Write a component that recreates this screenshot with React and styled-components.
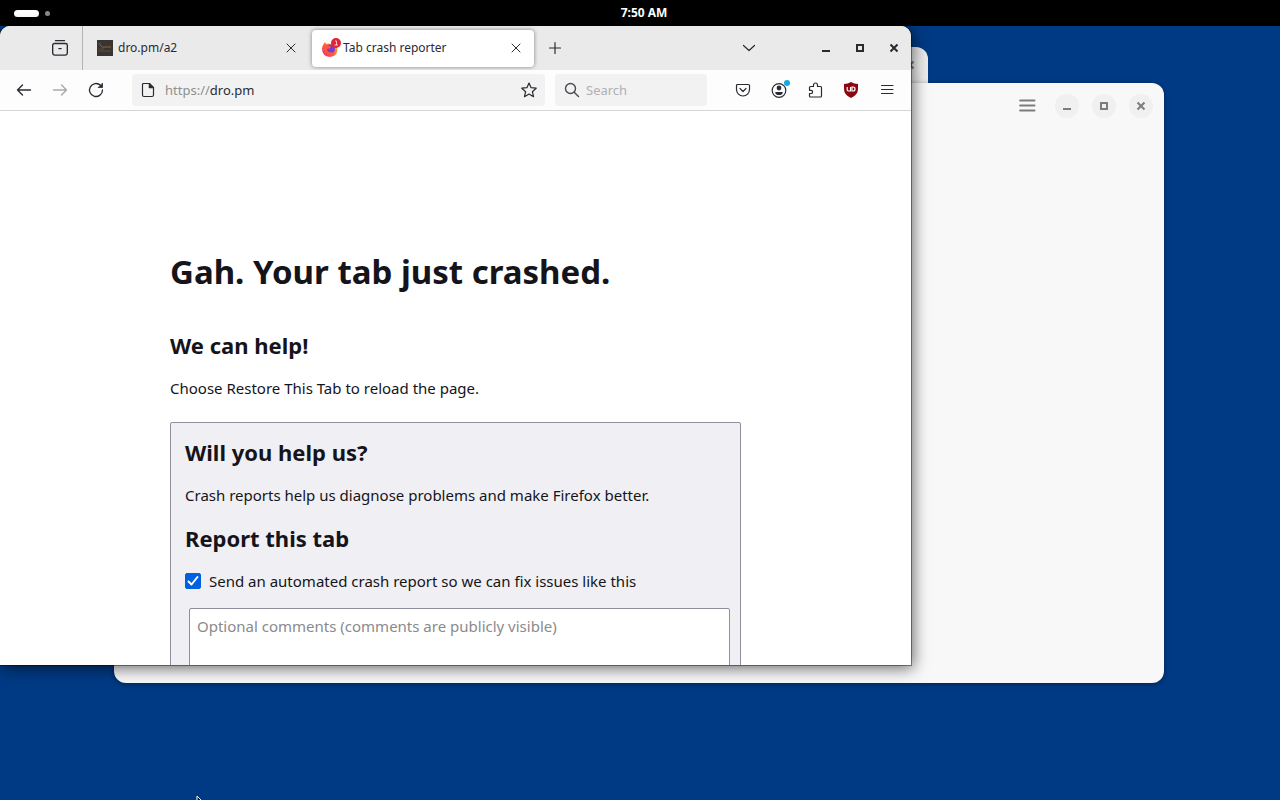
import React, { useState } from "react";
import styled, { createGlobalStyle } from "styled-components";

const GlobalStyle = createGlobalStyle`
  * {
    box-sizing: border-box;
  }

  body {
    margin: 0;
    font-family: "Noto Sans", sans-serif;
    color: #15141a;
  }

  button,
  input,
  textarea {
    font-family: inherit;
  }
`;

/* desktop */

const Desktop = styled.div`
  display: flex;
  flex-direction: column;
  height: 100vh;
  overflow: hidden;
  background: #003a84;
`;

const TopBar = styled.header`
  display: grid;
  grid-template-columns: 1fr auto 1fr;
  align-items: center;
  height: 26px;
  flex: none;
  padding: 0 6px 0 14px;
  background: #000;
`;

const Workspaces = styled.button`
  display: flex;
  align-items: center;
  gap: 6px;
  padding: 0;
  border: 0;
  background: none;
`;

const Dot = styled.span`
  width: ${props => (props.$active ? "25px" : "5px")};
  height: ${props => (props.$active ? "7px" : "5px")};
  border-radius: 4px;
  background: ${props => (props.$active ? "#fff" : "#8a8a8a")};
`;

const Clock = styled.time`
  font-size: 12px;
  font-weight: 700;
  line-height: 16px;
  color: #fff;
`;

const Workspace = styled.main`
  position: relative;
  flex: 1;
`;

const Window = styled.section`
  position: absolute;
  left: ${props => props.$x}px;
  top: ${props => props.$y}px;
  width: ${props => props.$w}px;
  height: ${props => props.$h}px;
  display: flex;
  flex-direction: column;
  overflow: hidden;
`;

const TerminalWindow = styled(Window)`
  align-items: flex-end;
  padding: 6px;
  border-radius: 12px 12px 0 0;
  background: #ededed;
`;

const FilesWindow = styled(Window)`
  border-radius: 12px;
  background: #f8f8f8;
  box-shadow: 0 1px 5px rgba(0, 0, 0, 0.4);
`;

const BrowserWindow = styled(Window)`
  border-radius: 10px 10px 0 0;
  background: #fff;
  box-shadow: 0 0 0 1px rgba(0, 0, 0, 0.4), 2px 3px 16px rgba(0, 0, 0, 0.6);
`;

const FilesHeader = styled.header`
  display: flex;
  justify-content: flex-end;
  align-items: center;
  gap: 13px;
  height: 46px;
  padding: 0 11px;
`;

const RoundButton = styled.button`
  display: flex;
  align-items: center;
  justify-content: center;
  width: 24px;
  height: 24px;
  padding: 0;
  border: 0;
  border-radius: 50%;
  background: ${props => (props.$plain ? "none" : "#f0f0f0")};
  margin-right: ${props => (props.$plain ? "3px" : "0")};
  color: #7c7c7c;
`;

/* browser chrome */

const TabStrip = styled.div`
  display: flex;
  align-items: center;
  flex: none;
  height: 44px;
  background: #eaeaea;
`;

const RecentTabs = styled.div`
  display: flex;
  align-items: center;
  justify-content: flex-end;
  align-self: stretch;
  width: 83px;
  padding-right: 4px;
  margin-right: 4px;
  border-right: 1px solid #b4b4b4;
`;

const Tabs = styled.div`
  display: flex;
  gap: 3px;
`;

const Tab = styled.div`
  display: flex;
  align-items: center;
  width: 222px;
  height: 37px;
  padding: 0 6px 0 10px;
  border-radius: 4px;
  background: ${props => (props.$active ? "#fff" : "transparent")};
  box-shadow: ${props =>
    props.$active ? "0 0 4px rgba(0, 0, 0, 0.45)" : "none"};
`;

const TabTitle = styled.button`
  display: flex;
  align-items: center;
  gap: 5px;
  flex: 1;
  padding: 0;
  border: 0;
  background: none;
  font-size: 12px;
  line-height: 16px;
  color: #2b2a33;

  svg {
    overflow: visible;
  }
`;

const ChromeButton = styled.button`
  position: relative;
  display: flex;
  align-items: center;
  justify-content: center;
  flex: none;
  width: ${props => props.$w || 36}px;
  height: 32px;
  padding: 0;
  border: 0;
  background: none;
  color: ${props => (props.disabled ? "#a9a9a9" : "#2b2a33")};
`;

const WindowControls = styled.div`
  display: flex;
  align-items: center;
  margin-left: auto;
`;

const ListAllTabs = styled(ChromeButton)`
  margin-right: 42px;
`;

const Toolbar = styled.nav`
  display: flex;
  align-items: center;
  flex: none;
  height: 41px;
  padding: 0 6px;
  background: #fdfdfd;
  border-bottom: 1px solid #d6d6d6;
`;

const Fields = styled.div`
  display: flex;
  flex: 1;
  gap: 10px;
  margin: 0 18px;
`;

const UrlBar = styled.div`
  display: flex;
  align-items: center;
  flex: 1;
  height: 32px;
  padding-left: 8px;
  border-radius: 4px;
  background: #f2f2f2;
  color: #2b2a33;
`;

const Address = styled.a`
  flex: 1;
  margin-left: 9px;
  font-size: 13px;
  line-height: 18px;
  color: #2b2a33;
  text-decoration: none;

  span {
    color: #8f8f8f;
  }
`;

const SearchBar = styled.label`
  display: flex;
  align-items: center;
  gap: 6px;
  width: 152px;
  height: 32px;
  padding: 0 9px;
  border-radius: 4px;
  background: #f2f2f2;
  color: #4a4952;
`;

const SearchInput = styled.input`
  flex: 1;
  min-width: 0;
  padding: 0;
  border: 0;
  outline: 0;
  background: none;
  font-size: 13px;
  line-height: 18px;

  &::placeholder {
    color: #b0b0b0;
    opacity: 1;
  }
`;

const Badge = styled.span`
  position: absolute;
  top: 6px;
  right: 7px;
  width: 6px;
  height: 6px;
  border-radius: 50%;
  background: #12a8e0;
`;

/* crash page */

const Page = styled.article`
  flex: 1;
  min-height: 0;
  overflow: hidden;
  padding: 139px 170px 0;
`;

const Title = styled.h1`
  margin: 0 0 36px;
  font-size: 33px;
  font-weight: 700;
  line-height: 44px;
`;

const Heading = styled.h2`
  margin: 0 0 18px;
  font-size: 22px;
  font-weight: 700;
  line-height: 30px;
`;

const Text = styled.p`
  margin: 0 0 ${props => props.$gap || 18}px;
  font-size: 15px;
  line-height: 20px;
`;

const ReportBox = styled.form`
  padding: 14px 10px 14px 14px;
  border: 1px solid #8f8f9d;
  border-radius: 2px;
  background: #f0f0f4;
`;

const CheckRow = styled.label`
  display: flex;
  align-items: center;
  gap: 8px;
  margin-bottom: 17px;
  font-size: 15px;
  line-height: 20px;
`;

const Checkbox = styled.input`
  appearance: none;
  width: 16px;
  height: 16px;
  margin: 0;
  border: 1px solid #8f8f9d;
  border-radius: 2px;
  background: #fff;

  &:checked {
    border-color: #0061e0;
    background: #0061e0
      url("data:image/svg+xml,%3Csvg xmlns='http://www.w3.org/2000/svg' viewBox='0 0 14 14'%3E%3Cpath d='M2.5 7.5l3 3 6-7.5' fill='none' stroke='white' stroke-width='2' stroke-linecap='round' stroke-linejoin='round'/%3E%3C/svg%3E")
      center / 14px no-repeat;
  }
`;

const Comments = styled.textarea`
  display: block;
  width: calc(100% - 4px);
  height: 100px;
  margin-left: 4px;
  padding: 7px;
  border: 1px solid #8f8f9d;
  border-radius: 2px;
  background: #fff;
  font-size: 15px;
  line-height: 20px;
  resize: none;

  &::placeholder {
    color: #8a8a8e;
    opacity: 1;
  }
`;

const Pointer = styled.svg`
  position: absolute;
  left: 196px;
  top: 769px;
`;

const Svg = ({ size = 16, w = 1.2, children }) => (
  <svg
    width={size}
    height={size}
    viewBox="0 0 16 16"
    fill="none"
    stroke="currentColor"
    strokeWidth={w}
    strokeLinecap="round"
    strokeLinejoin="round"
    aria-hidden="true"
  >
    {children}
  </svg>
);

const MinimizeIcon = () => (
  <Svg w={2}>
    <path d="M4 11h8" strokeLinecap="butt" />
  </Svg>
);

const MaximizeIcon = () => (
  <Svg w={2}>
    <path d="M5 5h6v6H5z" strokeLinejoin="miter" />
  </Svg>
);

const CloseIcon = () => (
  <Svg w={2}>
    <path d="M4.5 4.5l7 7M11.5 4.5l-7 7" strokeLinecap="butt" />
  </Svg>
);

const ThinClose = () => (
  <Svg w={1}>
    <path d="M4 4l8 8M12 4l-8 8" />
  </Svg>
);

const MenuIcon = ({ size, w }) => (
  <Svg size={size} w={w}>
    <path d="M2.5 3.5h11.5M2.5 7.500h11.500M2.500 11.500h11.500" />
  </Svg>
);

const TerminalFavicon = () => (
  <svg width="16" height="16" viewBox="0 0 16 16" aria-hidden="true">
    <path d="M0 0h16v16H0z" fill="#393433" />
    <path d="M2 3l2 3q1 2 3 1h7" stroke="#8a6238" fill="none" />
    <path d="M1 11h13M2 9h5" stroke="#664b35" fill="none" />
  </svg>
);

/* the crash badge hangs over the right edge of the logo */
const FirefoxFavicon = () => (
  <svg width="16" height="16" viewBox="0 0 16 16" aria-hidden="true">
    <defs>
      <linearGradient id="fox" x1="1" y1="0" x2="0" y2="1">
        <stop offset="0" stopColor="#ffc53c" />
        <stop offset="0.4" stopColor="#ff7a2c" />
        <stop offset="1" stopColor="#ee1f70" />
      </linearGradient>
    </defs>
    <path
      d="M1 5l2-3 1 2q3-1 5 0l6 3q2 9-7 10Q0 16 0 9q0-2 1-4z"
      fill="url(#fox)"
    />
    <circle cx="8.500" cy="9" r="4.500" fill="#7b3bd6" />
    <path d="M2 6q4-2 7 1-1 2-4 2 0 4 6 3-3 4-7 1-3-3-2-7z" fill="#ff5440" />
    <circle cx="14" cy="3" r="5" fill="#de2435" />
    <path d="M13 1h1.500v4M12.500 5h3.500" stroke="#ffc9cd" fill="none" />
  </svg>
);

const ShieldIcon = () => (
  <svg width="16" height="16" viewBox="0 0 16 16" aria-hidden="true">
    <path
      d="M8 0q3 2 7 2v5q0 6-7 9Q1 13 1 7V2q4 0 7-2z"
      fill="#8a0610"
    />
    <path
      d="M4.200 5v2.800q0 1 1.200 1.200h2.100V5M9 5v4h1q2 0 2-2t-2-2z"
      fill="none"
      stroke="#fff"
      strokeWidth="1.2"
    />
  </svg>
);

const Controls = ({ as: Button, ...rest }) => (
  <>
    <Button type="button" aria-label="Minimize" {...rest}>
      <MinimizeIcon />
    </Button>
    <Button type="button" aria-label="Maximize" {...rest}>
      <MaximizeIcon />
    </Button>
    <Button type="button" aria-label="Close" {...rest}>
      <CloseIcon />
    </Button>
  </>
);

const tabs = [
  { title: "dro.pm/a2", icon: <TerminalFavicon /> },
  { title: "Tab crash reporter", icon: <FirefoxFavicon /> }
];

const Browser = () => {
  const [active, setActive] = useState(1);
  const [send, setSend] = useState(true);

  return (
    <BrowserWindow $x={0} $y={0} $w={911} $h={639}>
      <TabStrip>
        <RecentTabs>
          <ChromeButton type="button" aria-label="Recent browsing">
            <Svg size={18}>
              <path d="M4 1.500h8M3 4h10a1.500 1.500 0 0 1 1.500 1.500v7A1.800 1.800 0 0 1 12.700 14.300H3.300A1.800 1.800 0 0 1 1.500 12.500v-7A1.500 1.500 0 0 1 3 4zM7 8.500h2" />
            </Svg>
          </ChromeButton>
        </RecentTabs>
        <Tabs>
          {tabs.map((tab, index) => (
            <Tab key={tab.title} $active={index === active}>
              <TabTitle type="button" onClick={() => setActive(index)}>
                {tab.icon}
                {tab.title}
              </TabTitle>
              <ChromeButton $w={24} type="button" aria-label="Close tab">
                <ThinClose />
              </ChromeButton>
            </Tab>
          ))}
        </Tabs>
        <ChromeButton $w={42} type="button" aria-label="New tab">
          <Svg>
            <path d="M8 2.500v11M2.500 8h11" />
          </Svg>
        </ChromeButton>
        <WindowControls>
          <ListAllTabs type="button" aria-label="List all tabs">
            <Svg>
              <path d="M2.500 5.500L8 10.500l5.500-5" />
            </Svg>
          </ListAllTabs>
          <Controls as={ChromeButton} $w={34} />
        </WindowControls>
      </TabStrip>

      <Toolbar>
        <ChromeButton type="button" aria-label="Back">
          <Svg w={1.4}>
            <path d="M14.500 8H1.500M6.500 3L1.500 8l5 5" />
          </Svg>
        </ChromeButton>
        <ChromeButton type="button" aria-label="Forward" disabled>
          <Svg w={1.4}>
            <path d="M1.500 8h13M9.500 3l5 5-5 5" />
          </Svg>
        </ChromeButton>
        <ChromeButton type="button" aria-label="Reload">
          <Svg w={1.300}>
            <path d="M12.500 3.300A6.500 6.500 0 1 0 14.500 8" />
            <path d="M14.500 1.500v4H10.500z" fill="currentColor" strokeWidth="0.800" />
          </Svg>
        </ChromeButton>
        <Fields>
          <UrlBar>
            <Svg>
              <path d="M3.500 1.500h6L13.500 5.500v7.500a1.500 1.500 0 0 1-1.500 1.500H4A1.500 1.500 0 0 1 2.500 13V2.500a1 1 0 0 1 1-1z" />
              <path d="M9 1.500v4.500h4.500z" fill="currentColor" strokeWidth="0.500" />
            </Svg>
            <Address href="https://dro.pm">
              <span>https://</span>dro.pm
            </Address>
            <ChromeButton $w={32} type="button" aria-label="Bookmark">
              <Svg>
                <path d="M8 1l2.100 4.700 5.100.5-3.800 3.500 1.100 5L8 12.100l-4.500 2.600 1.100-5L.8 6.200l5.100-.5z" />
              </Svg>
            </ChromeButton>
          </UrlBar>
          <SearchBar>
            <Svg w={1.400}>
              <circle cx="6.500" cy="6.500" r="5" />
              <path d="M10.200 10.200L14.500 14.500" />
            </Svg>
            <SearchInput placeholder="Search" aria-label="Search" />
          </SearchBar>
        </Fields>
        <ChromeButton type="button" aria-label="Pocket">
          <Svg>
            <path d="M2.500 2.500h11a1 1 0 0 1 1 1V7.500a6.500 6.500 0 0 1-13 0V3.500a1 1 0 0 1 1-1zM5 6.500l3 3 3-3" />
          </Svg>
        </ChromeButton>
        <ChromeButton type="button" aria-label="Account">
          <Svg>
            <circle cx="8" cy="8.500" r="6.800" />
            <circle cx="8" cy="6" r="1.800" fill="currentColor" />
            <path d="M4.800 10.500h6.400q-.5 2-3.200 2t-3.200-2z" fill="currentColor" />
          </Svg>
          <Badge />
        </ChromeButton>
        <ChromeButton type="button" aria-label="Extensions">
          <Svg>
            <path d="M6.500 4.500V3a2 2 0 0 1 4 0v1.500h3a1 1 0 0 1 1 1V14a1 1 0 0 1-1 1H3.500a1 1 0 0 1-1-1v-2.500h1.500a1.600 1.600 0 0 0 0-3.200H2.500V5.500a1 1 0 0 1 1-1z" />
          </Svg>
        </ChromeButton>
        <ChromeButton type="button" aria-label="uBlock Origin">
          <ShieldIcon />
        </ChromeButton>
        <ChromeButton type="button" aria-label="Menu">
          <MenuIcon w={1} />
        </ChromeButton>
      </Toolbar>

      <Page>
        <Title>Gah. Your tab just crashed.</Title>
        <Heading>We can help!</Heading>
        <Text $gap={24}>Choose Restore This Tab to reload the page.</Text>
        <ReportBox>
          <Heading>Will you help us?</Heading>
          <Text>Crash reports help us diagnose problems and make Firefox better.</Text>
          <Heading>Report this tab</Heading>
          <CheckRow>
            <Checkbox
              type="checkbox"
              checked={send}
              onChange={e => setSend(e.target.checked)}
            />
            Send an automated crash report so we can fix issues like this
          </CheckRow>
          <Comments
            aria-label="Comments"
            placeholder="Optional comments (comments are publicly visible)"
          />
        </ReportBox>
      </Page>
    </BrowserWindow>
  );
};

export default function App() {
  return (
    <Desktop>
      <GlobalStyle />
      <TopBar>
        <Workspaces type="button" aria-label="Activities">
          <Dot $active />
          <Dot />
        </Workspaces>
        <Clock>7:50 AM</Clock>
      </TopBar>
      <Workspace>
        {/* windows from back to front */}
        <TerminalWindow $x={500} $y={21} $w={428} $h={300}>
          <RoundButton type="button" aria-label="Close">
            <CloseIcon />
          </RoundButton>
        </TerminalWindow>
        <FilesWindow $x={114} $y={57} $w={1050} $h={600}>
          <FilesHeader>
            <RoundButton $plain type="button" aria-label="Main menu">
              <MenuIcon size={20} w={1.600} />
            </RoundButton>
            <Controls as={RoundButton} />
          </FilesHeader>
        </FilesWindow>
        <Browser />
        <Pointer width="12" height="18" viewBox="0 0 12 18" aria-hidden="true">
          <path d="M1 1v13l3-3 2 5 2-1-2-5h4z" fill="#111" stroke="#fff" />
        </Pointer>
      </Workspace>
    </Desktop>
  );
}
